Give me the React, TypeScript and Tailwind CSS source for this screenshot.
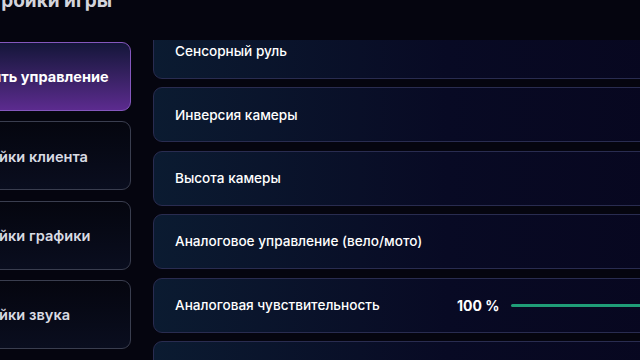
import React from 'react';

const tabs = [
    { label: 'Настроить управление', active: true },
    { label: 'Настройки клиента', active: false },
    { label: 'Настройки графики', active: false },
    { label: 'Настройки звука', active: false },
];

const rows = [
    'Сенсорный руль',
    'Инверсия камеры',
    'Высота камеры',
    'Аналоговое управление (вело/мото)',
    'Аналоговая чувствительность',
    'Вибрация',
];

export default function App() {
    return (
        <div
            className="relative w-[640px] h-[360px] overflow-hidden bg-[#05050f] text-white"
            style={{ fontFamily: 'Inter, "Noto Sans", sans-serif' }}
        >
            <div className="-ml-[80px] w-[820px] flex flex-col">
                {/* Заголовок */}
                <div className="h-[40px] pl-[35px]">
                    <h1 className="-mt-[12px] text-[19px] font-bold leading-[26px] text-[#d3d4dc] whitespace-nowrap">
                        Настройки игры
                    </h1>
                </div>

                <div className="flex gap-[22px]">
                    {/* Вкладки */}
                    <div className="w-[211px] shrink-0 flex flex-col gap-[10.3px] pt-[2px]">
                        {tabs.map((t) =>
                            t.active ? (
                                <div
                                    key={t.label}
                                    className="h-[69px] rounded-[9px] border border-[#8457bd] bg-linear-to-b from-[#14163a] to-[#5c2b8f] flex items-center pl-[18px] text-[14.5px] font-bold whitespace-nowrap"
                                >
                                    {t.label}
                                </div>
                            ) : (
                                <div
                                    key={t.label}
                                    className="h-[69px] rounded-[9px] border border-[#3a3e4f] bg-linear-to-b from-[#05060f] to-[#0a0e1f] flex items-center pl-[25px] pt-[4px] text-[14.6px] font-semibold text-[#d9dbe3] whitespace-nowrap"
                                >
                                    {t.label}
                                </div>
                            )
                        )}
                    </div>

                    {/* Список опций */}
                    <div className="flex-1 h-[320px] overflow-hidden">
                        <div className="-mt-[16px] flex flex-col gap-[8.4px]">
                            {rows.map((r, i) => (
                                <div
                                    key={r}
                                    className="h-[55px] shrink-0 rounded-[9px] border border-[#292c50] bg-linear-to-r from-[#0b1b31] via-[#080a24] to-[#07061e] flex items-center pl-[21px] text-[13.6px] font-medium whitespace-nowrap"
                                >
                                    {i === 4 ? (
                                        <>
                                            <span className="w-[282px]">{r}</span>
                                            <span className="w-[42px] text-right text-[14px] font-bold whitespace-nowrap">100 %</span>
                                            <div className="ml-[12px] flex-1 h-[3px] rounded-full bg-[#1f9d77]" />
                                        </>
                                    ) : (
                                        r
                                    )}
                                </div>
                            ))}
                        </div>
                    </div>
                </div>
            </div>
        </div>
    );
}
